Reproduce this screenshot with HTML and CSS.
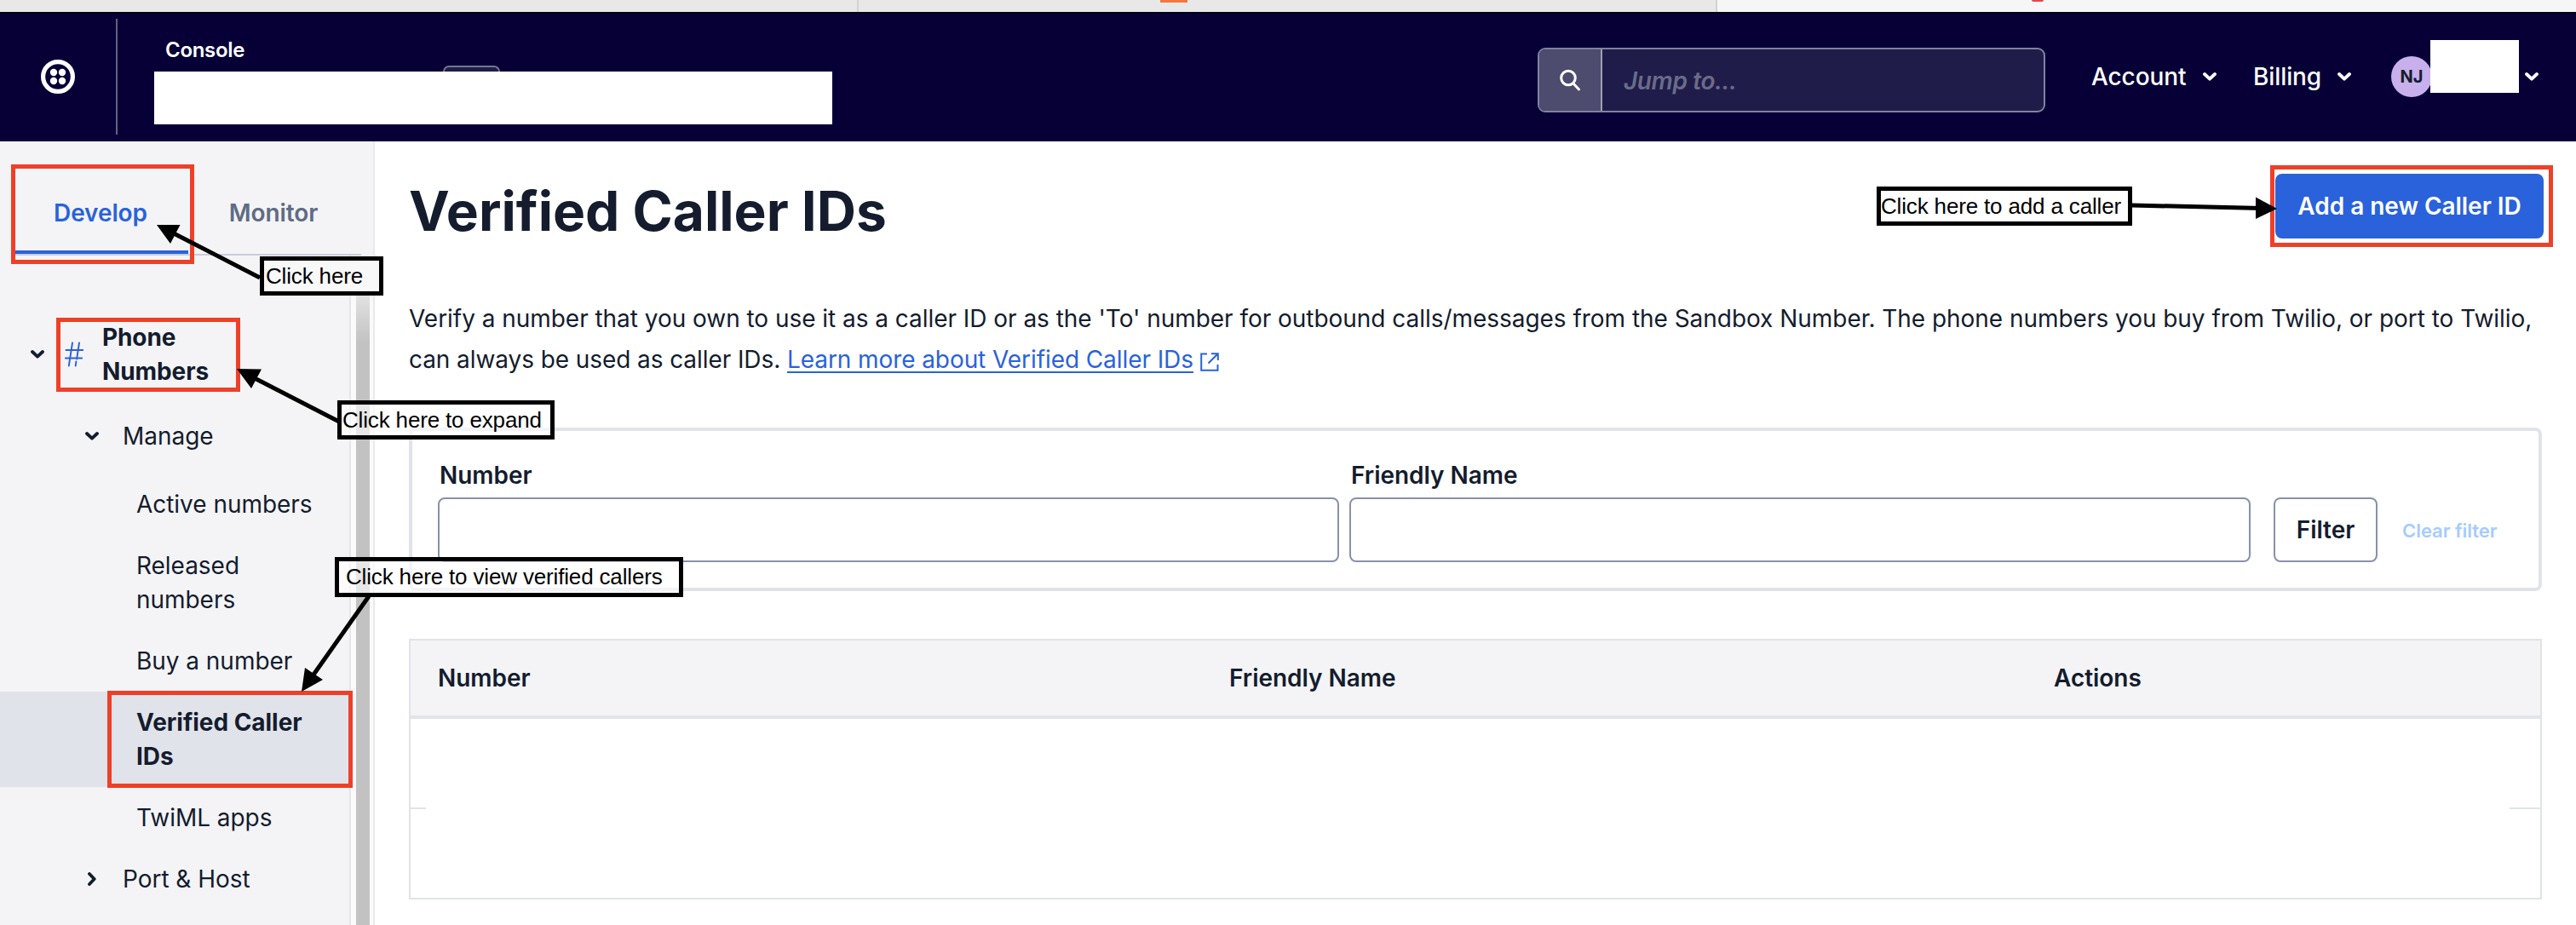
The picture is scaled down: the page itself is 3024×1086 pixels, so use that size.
FILE: index.html
```html
<!DOCTYPE html>
<html lang="en">
<head>
<meta charset="utf-8">
<title>Verified Caller IDs</title>
<link rel="stylesheet" href="styles.css">
</head>
<body>
<svg class="defs" aria-hidden="true">
  <symbol id="chev" viewBox="0 0 16 12"><path d="M2 3 8 8.700 14 3" fill="none" stroke="currentColor" stroke-width="3.800" stroke-linecap="round" stroke-linejoin="round"/></symbol>
</svg>
<div class="browser-tabs">
  <div class="btab"></div>
  <div class="btab"><span class="fav-orange"></span></div>
  <div class="btab active"><span class="fav-red"></span></div>
</div>
<header class="topbar">
  <div class="brand">
    <svg class="logo" viewBox="0 0 40 40"><circle cx="20" cy="20" r="17.4" fill="none" stroke="#fff" stroke-width="5.2"/><g fill="#fff"><circle cx="15" cy="15" r="4.2"/><circle cx="25" cy="15" r="4.2"/><circle cx="15" cy="25" r="4.2"/><circle cx="25" cy="25" r="4.2"/></g></svg>
  </div>
  <div class="account">
    <div class="console">Console</div>
    <span class="pill"></span>
    <div class="account-cover"></div>
  </div>
  <div class="search">
    <div class="search-icon"><svg width="28" height="28" viewBox="0 0 28 28" fill="none" stroke="#fff" stroke-width="3" stroke-linecap="round"><circle cx="12" cy="11.5" r="8.3"/><path d="m18 18 6.5 7"/></svg></div>
    <div class="search-text">Jump to...</div>
  </div>
  <nav class="menu">
    <span class="m-account">Account</span><svg class="chev"><use href="#chev"/></svg>
    <span class="m-billing">Billing</span><svg class="chev"><use href="#chev"/></svg>
    <span class="avatar">NJ</span><span class="user-cover"></span><svg class="chev last"><use href="#chev"/></svg>
  </nav>
</header>
<div class="body">
  <aside class="sidebar">
    <div class="tabs"><div class="tab on"><span>Develop</span></div><div class="tab"><span>Monitor</span></div></div>
    <div class="tree">
      <div class="row top"><svg class="chev"><use href="#chev"/></svg>
        <svg class="hash" viewBox="0 0 22 30" fill="none" stroke="#2a62db" stroke-width="1.9" stroke-linecap="round"><path d="M9 1.5 4.8 28.5M17 1.5l-2.900 19M13.4 23.5l-.7 5M1.5 10h20M.8 19.5h19.4"/></svg>
        <b>Phone<br>Numbers</b></div>
      <div class="row mid"><svg class="chev"><use href="#chev"/></svg><span>Manage</span></div>
      <div class="row leaf first">Active numbers</div>
      <div class="row leaf">Released<br>numbers</div>
      <div class="row leaf">Buy a number</div>
      <div class="row leaf selected">Verified Caller<br>IDs</div>
      <div class="row leaf">TwiML apps</div>
      <div class="row mid"><svg class="chev side"><use href="#chev"/></svg><span>Port &amp; Host</span></div>
    </div>
    <div class="track"><div class="thumb"></div></div>
  </aside>
  <main class="main">
    <div class="head"><h1>Verified Caller IDs</h1><button class="add">Add a new Caller ID</button></div>
    <p class="intro"><span class="l1">Verify a number that you own to use it as a caller ID or as the 'To' number for outbound calls/messages from the Sandbox Number. The phone numbers you buy from Twilio, or port to Twilio,</span><br><span class="l2">can always be used as caller IDs. <a>Learn more about Verified Caller IDs</a></span><svg class="ext" viewBox="0 0 22 22" fill="none" stroke="#2a62db" stroke-width="2"><path d="M8 1.5H1.2v19.3h19.3V14M13 1.2h7.8v7.8M20.5 1.5 9.5 12.5"/></svg></p>
    <section class="filter">
      <label class="field"><span>Number</span><span class="input"></span></label>
      <label class="field"><span>Friendly Name</span><span class="input"></span></label>
      <button class="fbtn">Filter</button>
      <span class="clear">Clear filter</span>
    </section>
    <section class="table">
      <div class="thead"><div>Number</div><div>Friendly Name</div><div>Actions</div></div>
      <div class="trow"><i class="sl"></i><i class="sr"></i></div>
      <div class="trow"></div>
    </section>
  </main>
</div>
<div class="box b-dev"></div><div class="box b-phone"></div><div class="box b-ver"></div><div class="box b-add"></div>
<div class="note n1"><span>Click here</span></div>
<div class="note n2"><span>Click here to expand</span></div>
<div class="note n3"><span>Click here to view verified callers</span></div>
<div class="note n4"><span>Click here to add a caller</span></div>
<svg class="arrows" viewBox="0 0 3024 1086">
  <g stroke="#000" stroke-width="5"><path d="M305 326 200 272"/><path d="M398 495 295 442"/><path d="M433 700 366 795"/><path d="M2502 241 2655 244.500"/></g>
  <path d="M184 264 211.500 264 200 286ZM278 433 307 433.500 295 456ZM354 812 358 784 379 798ZM2673 245 2648 231.500 2648 257Z"/>
</svg>
</body>
</html>
```
FILE: styles.css
```css
* { box-sizing: border-box; }
body { margin: 0; width: 3024px; height: 1086px; overflow: hidden; position: relative; background: #fff; color: #141c2e; font: 28px/40px Inter, sans-serif; letter-spacing: -0.037px; display: flex; flex-direction: column; }
button { font: inherit; letter-spacing: inherit; }
.defs { position: absolute; width: 0; height: 0; }
.browser-tabs { display: flex; height: 14px; flex: none; background: #e8e8e8; }
.btab { width: 1008px; border-right: 2px solid #d2d2d2; }
.btab.active { background: #f5f6f5; border: 0; }
.fav-orange { display: block; width: 32px; height: 3px; margin-left: 354px; background: #f07840; }
.fav-red { display: block; width: 14px; height: 2px; margin-left: 369px; background: #e5484d; border-radius: 0 0 7px 7px; }
.topbar { display: flex; height: 152px; flex: none; background: #060037; color: #fff; border-top: 2px solid #02001c; }
.brand { width: 138px; height: 136px; margin-top: 6px; border-right: 2px solid #64617f; display: flex; align-items: center; padding-left: 48px; }
.logo { width: 40px; height: 40px; }
.account { width: 796px; margin-left: 43px; display: flex; flex-direction: column; align-items: flex-start; }
.console { font-size: 24px; font-weight: 600; letter-spacing: -0.3px; line-height: 30px; margin: 28px 0 0 13px; height: 33px; }
.pill { width: 67px; height: 7px; margin-left: 339px; border: 2px solid #77758f; border-bottom: 0; background: #1f1c4a; border-radius: 8px 8px 0 0; }
.account-cover { width: 796px; height: 62px; background: #fff; }
.search { width: 596px; height: 76px; margin: 40px 0 0 828px; border: 2px solid #8281a0; border-radius: 9px; background: #1f1c4a; display: flex; overflow: hidden; }
.search-icon { width: 74px; background: #4d4b6e; border-right: 2px solid #a09fb5; display: flex; align-items: center; justify-content: center; }
.search-text { padding: 20px 0 0 25px; line-height: 34px; color: #6b6b88; font-style: italic; font-weight: 600; letter-spacing: -0.4px; }
.menu { display: flex; align-items: center; height: 88px; margin-top: 30px; padding-left: 54px; }
.chev { width: 16px; height: 12px; flex: none; }
.m-account { width: 131px; }
.m-account, .m-billing { white-space: nowrap; font-weight: 500; letter-spacing: -0.1px; }
.m-billing { width: 99px; margin-left: 43px; }
.avatar { width: 48px; height: 48px; margin-left: 47px; border-radius: 50%; background: #c7b0ec; color: #141c2e; font-size: 20px; font-weight: 700; line-height: 48px; text-align: center; }
.user-cover { width: 104px; height: 62px; margin: -24px 7px 0 -2px; background: #fff; }
.body { display: flex; flex: 1; min-height: 0; }
.sidebar { width: 440px; flex: none; background: #f4f4f6; border-right: 2px solid #eaeaec; display: grid; grid-template: 134px 1fr / 412px 26px; }
.tabs { grid-column: 1 / 3; display: flex; width: 406px; margin-left: 18px; border-bottom: 2px solid #cacbdc; }
.tab { flex: 1; display: flex; align-items: flex-end; justify-content: center; padding: 0 3px 28px 0; font-weight: 600; color: #606b85; letter-spacing: -0.1px; }
.tab.on { color: #2a62db; border-bottom: 4px solid #2a62db; padding-bottom: 24px; }
.tree { padding-top: 60px; border-right: 2px solid #e6e6e8; }
.row { padding: 16px 0; display: flex; align-items: center; white-space: nowrap; }
.top { height: 112px; padding-left: 36px; margin-bottom: 4px; }
.top b { margin-left: 22px; font-weight: 700; letter-spacing: -0.1px; }
.hash { width: 22px; height: 30px; margin-left: 24px; }
.mid { padding-left: 100px; }
.mid span { margin-left: 28px; }
.leaf { padding-left: 160px; }
.first { margin-top: 8px; }
.selected { background: #e1e3ea; font-weight: 700; }
.side { transform: rotate(-90deg); }
.track { margin-top: 22px; padding-left: 6px; background: #fafafa; }
.thumb { width: 16px; height: 100%; background: linear-gradient(#f0f0f0, #c2c2c2 80px); }
.main { flex: 1; padding: 38px 40px 0; }
.head { display: flex; justify-content: space-between; align-items: flex-start; }
h1 { margin: 4px 0 0; font-size: 64px; line-height: 80px; font-weight: 700; }
.add { width: 315px; height: 76px; margin-right: -2px; border: 0; border-radius: 8px; background: #2a62db; color: #fff; font-weight: 600; padding: 0; white-space: nowrap; }
.intro { margin: 62px 0 0; line-height: 48px; white-space: nowrap; height: 96px; }
.l2 { letter-spacing: -0.08px; }
.intro a { color: #2a62db; text-decoration: underline; text-decoration-thickness: 2px; text-underline-offset: 4px; }
.ext { width: 22px; height: 22px; margin-left: 8px; vertical-align: -4px; }
.filter { height: 192px; margin-top: 56px; border: 4px solid #e1e3ea; border-radius: 8px; display: flex; padding: 32px 0 0 30px; }
.field { width: 1058px; margin-right: 12px; font-weight: 600; }
.field > span { display: block; padding-left: 2px; }
.field > .input { height: 76px; margin-top: 6px; border: 2px solid #8891aa; border-radius: 8px; }
.fbtn { width: 122px; height: 76px; margin: 46px 0 0 15px; padding: 0; background: #fff; border: 2px solid #8891aa; border-radius: 8px; font-weight: 600; color: inherit; }
.clear { margin: 65px 0 0 29px; font-size: 22px; font-weight: 600; color: #a6cbff; white-space: nowrap; }
.table { margin-top: 56px; height: 306px; border: 2px solid #e1e3ea; }
.thead { display: flex; height: 92px; padding: 24px 0 0 32px; background: #f4f4f6; border-bottom: 4px solid #e1e3ea; font-weight: 600; }
.thead div { width: 929px; }
.thead div:nth-child(2) { width: 968px; }
.thead div:nth-child(3) { width: auto; }
.trow { height: 106px; display: flex; justify-content: space-between; align-items: flex-end; }
.sl, .sr { width: 18px; height: 2px; background: #e1e3ea; }
.sr { width: 36px; }
.box { position: absolute; border: 5px solid #ee4027; }
.b-dev { left: 13px; top: 193px; width: 215px; height: 117px; }
.b-phone { left: 66px; top: 373px; width: 216px; height: 87px; }
.b-ver { left: 126px; top: 811px; width: 288px; height: 114px; }
.b-add { left: 2665px; top: 194px; width: 332px; height: 96px; }
.note { position: absolute; border: 5px solid #000; background: rgba(255,255,255,.6); color: #000; font: 26px/36px "Liberation Sans", Arial, sans-serif; letter-spacing: -0.16px; white-space: nowrap; }
.n1 { left: 305px; top: 301px; width: 145px; height: 46px; padding-left: 2px; background: #f8f8f9; }
.n2 { left: 396px; top: 470px; width: 255px; height: 46px; padding-left: 1px; }
.n3 { left: 393px; top: 654px; width: 409px; height: 47px; padding-left: 8px; }
.n4 { left: 2203px; top: 219px; width: 300px; height: 46px; }
.arrows { position: absolute; left: 0; top: 0; width: 3024px; height: 1086px; pointer-events: none; }
```
